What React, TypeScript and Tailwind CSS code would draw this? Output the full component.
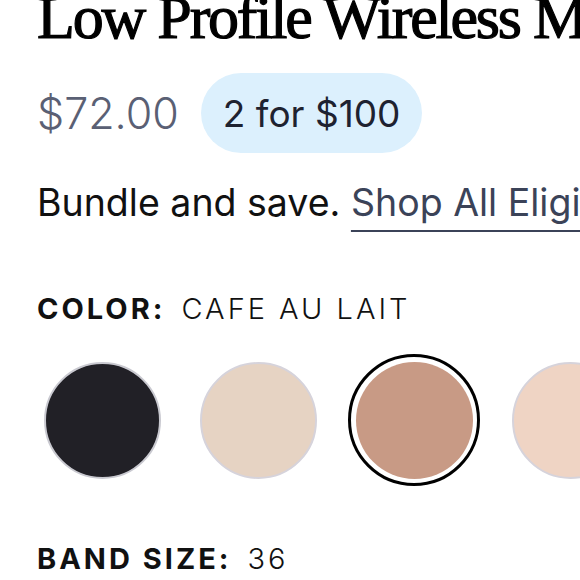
export default function App() {
  const swatches = [
    { name: "Black", color: "bg-[#212026]", ring: "border-[#c9c9d0]", selected: false },
    { name: "Champagne", color: "bg-[#e6d3c3]", ring: "border-[#d6d3db]", selected: false },
    { name: "Cafe Au Lait", color: "bg-[#c89a85]", ring: "border-transparent", selected: true },
    { name: "Blush", color: "bg-[#efd4c4]", ring: "border-[#d6d3db]", selected: false },
  ];

  return (
    <div className="w-[580px] h-[580px] overflow-hidden bg-white font-['Inter',sans-serif]">
      <div className="w-[1200px] pl-[37px]">
        {/* Title */}
        <h1 className="mt-[-14px] whitespace-nowrap font-['Liberation_Serif',serif] text-[62px] font-normal leading-[62px] tracking-[-2.2px] text-black [-webkit-text-stroke:1.2px_black]">
          Low Profile Wireless Mirrored Bra
        </h1>

        {/* Price */}
        <div className="mt-[25px] flex items-center gap-[22px]">
          <span className="text-[43px] font-light leading-none text-[#5a6074]">$72.00</span>
          <span className="flex h-[80px] items-center rounded-full bg-[#dcf0fd] px-[22px] text-[37px] font-normal leading-none text-[#1e2230]">
            2 for $100
          </span>
        </div>

        {/* Bundle */}
        <p className="mt-[28px] whitespace-nowrap text-[37.5px] leading-[44px] text-[#111]">
          Bundle and save.{" "}
          <a className="text-[#3b4358] underline decoration-[#3b4358] decoration-2 underline-offset-[14px]">
            Shop All Eligible Styles
          </a>
        </p>

        {/* Color */}
        <div className="mt-[69px] flex items-baseline gap-[16px] text-[29px] leading-none tracking-[3px] text-[#111]">
          <span className="font-bold">COLOR:</span>
          <span className="font-light">CAFE AU LAIT</span>
        </div>

        <div className="ml-[-1px] mt-[31px] flex items-center gap-[24px]">
          {swatches.map((s) =>
            s.selected ? (
              <div key={s.name} className="flex h-[132px] w-[132px] shrink-0 items-center justify-center rounded-full border-[3px] border-black">
                <div className={`h-[117px] w-[117px] rounded-full ${s.color}`} />
              </div>
            ) : (
              <div key={s.name} className="flex h-[132px] w-[132px] shrink-0 items-center justify-center">
                <div className={`h-[117px] w-[117px] rounded-full border-2 ${s.ring} ${s.color}`} />
              </div>
            )
          )}
        </div>

        {/* Band size */}
        <div className="mt-[58px] flex items-baseline gap-[16px] text-[29px] leading-none tracking-[3px] text-[#111]">
          <span className="font-bold">BAND SIZE:</span>
          <span className="font-light">36</span>
        </div>
      </div>
    </div>
  );
}
